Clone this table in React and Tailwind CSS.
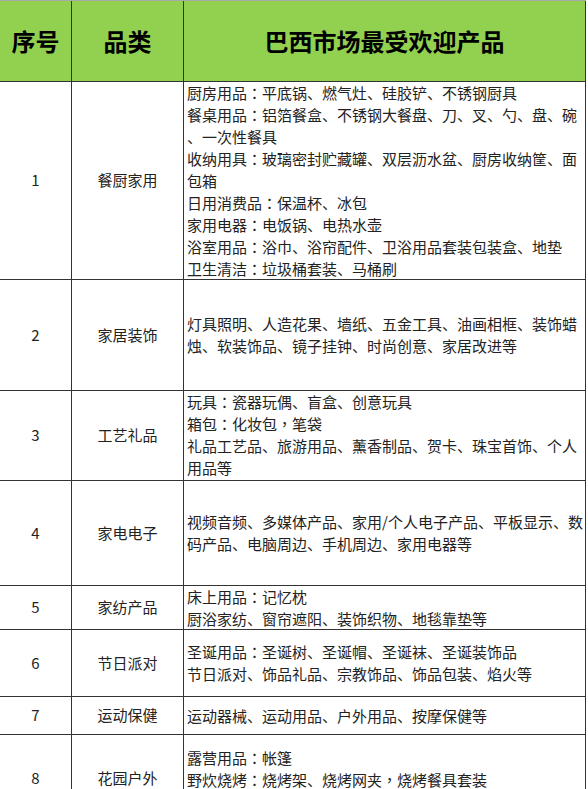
const rows = [
  {
    no: '1',
    cat: '餐厨家用',
    h: 'h-[198px]',
    align: 'justify-start',
    lines: [
      '厨房用品：平底锅、燃气灶、硅胶铲、不锈钢厨具',
      '餐桌用品：铝箔餐盒、不锈钢大餐盘、刀、叉、勺、盘、碗',
      '、一次性餐具',
      '收纳用具：玻璃密封贮藏罐、双层沥水盆、厨房收纳筐、面',
      '包箱',
      '日用消费品：保温杯、冰包',
      '家用电器：电饭锅、电热水壶',
      '浴室用品：浴巾、浴帘配件、卫浴用品套装包装盒、地垫',
      '卫生清洁：垃圾桶套装、马桶刷',
    ],
  },
  {
    no: '2',
    cat: '家居装饰',
    h: 'h-[111px]',
    align: 'justify-center',
    lines: [
      '灯具照明、人造花果、墙纸、五金工具、油画相框、装饰蜡',
      '烛、软装饰品、镜子挂钟、时尚创意、家居改进等',
    ],
  },
  {
    no: '3',
    cat: '工艺礼品',
    h: 'h-[90px]',
    align: 'justify-start',
    lines: [
      '玩具：瓷器玩偶、盲盒、创意玩具',
      '箱包：化妆包，笔袋',
      '礼品工艺品、旅游用品、薰香制品、贺卡、珠宝首饰、个人',
      '用品等',
    ],
  },
  {
    no: '4',
    cat: '家电电子',
    h: 'h-[105px]',
    align: 'justify-center',
    lines: [
      '视频音频、多媒体产品、家用/个人电子产品、平板显示、数',
      '码产品、电脑周边、手机周边、家用电器等',
    ],
  },
  {
    no: '5',
    cat: '家纺产品',
    h: 'h-[44px]',
    align: 'justify-center',
    lines: ['床上用品：记忆枕', '厨浴家纺、窗帘遮阳、装饰织物、地毯靠垫等'],
  },
  {
    no: '6',
    cat: '节日派对',
    h: 'h-[67px]',
    align: 'justify-center',
    lines: [
      '圣诞用品：圣诞树、圣诞帽、圣诞袜、圣诞装饰品',
      '节日派对、饰品礼品、宗教饰品、饰品包装、焰火等',
    ],
  },
  {
    no: '7',
    cat: '运动保健',
    h: 'h-[38px]',
    align: 'justify-center',
    lines: ['运动器械、运动用品、户外用品、按摩保健等'],
  },
  {
    no: '8',
    cat: '花园户外',
    h: 'h-[88px]',
    align: 'justify-start pt-[12px]',
    lines: ['露营用品：帐篷', '野炊烧烤：烧烤架、烧烤网夹，烧烤餐具套装'],
  },
]

// full-width colon / comma sit centred in the source font, so borrow the TC glyphs
function Line({ text }) {
  const parts = text.split(/([：，])/)
  return (
    <div className="leading-[22px] whitespace-nowrap">
      {parts.map((p, i) =>
        p === '：' || p === '，' ? (
          <span key={i} style={{ fontFamily: '"Noto Sans CJK TC", sans-serif' }}>{p}</span>
        ) : (
          p
        )
      )}
    </div>
  )
}

export default function App() {
  return (
    <div
      className="w-[588px] h-[789px] overflow-hidden bg-white text-[#222]"
      style={{ fontFamily: '"Noto Sans CJK SC", "Noto Sans", sans-serif' }}
    >
      {/* Header */}
      <div className="flex h-[82px] bg-[#92d050] border-t border-[#a8a8a8] border-b border-b-[#333] text-black font-bold text-[24px] w-[586px]">
        <div className="w-[72px] border-r border-[#333] flex items-center justify-center">序号</div>
        <div className="w-[112px] border-r border-[#333] flex items-center justify-center">品类</div>
        <div className="w-[402px] border-r border-[#333] flex items-center justify-center">巴西市场最受欢迎产品</div>
      </div>

      {/* Body */}
      {rows.map((r) => (
        <div key={r.no} className={`flex w-[586px] border-b border-[#333] text-[15px] ${r.h}`}>
          <div className="w-[72px] border-r border-[#333] flex items-center justify-center">{r.no}</div>
          <div className="w-[112px] border-r border-[#333] flex items-center justify-center">{r.cat}</div>
          <div className={`w-[402px] border-r border-[#333] flex flex-col pl-[3px] ${r.align}`}>
            {r.lines.map((l, i) => (
              <Line key={i} text={l} />
            ))}
          </div>
        </div>
      ))}
    </div>
  )
}
